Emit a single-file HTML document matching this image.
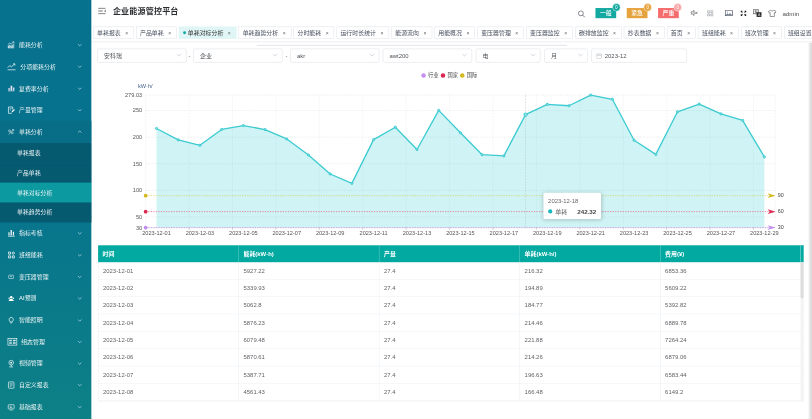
<!DOCTYPE html><html lang="zh"><head><meta charset="utf-8"><title>企业能源管控平台</title><style>
*{box-sizing:border-box;margin:0;padding:0}
html,body{width:812px;height:419px;overflow:hidden;background:#fff}
body{font-family:"Liberation Sans","Noto Sans CJK SC",sans-serif;color:#606266}
#app{position:absolute;left:0;top:0;width:1920px;height:991px;transform:scale(0.422917);transform-origin:0 0;overflow:hidden;background:#fff;filter:contrast(1)}
.abs{position:absolute}
#side{position:absolute;left:0;top:0;width:216px;height:991px;background:linear-gradient(180deg,#06728e 0%,#06728e 38%,#0d8086 100%)}
.mi{position:absolute;left:0;width:216px;height:51.3px;color:#fff;font-weight:350;font-size:14px;line-height:51px}
.mi .tx{position:absolute;left:45px;top:0;white-space:nowrap}
.mi svg.ic{position:absolute;left:17px;top:16px;width:19px;height:19px;overflow:visible}
.mi .ar{position:absolute;left:183px;top:20px;width:11px;height:11px}
.sub{position:absolute;left:0;width:216px;height:47.3px;color:#fff;font-weight:350;font-size:14px;line-height:47px;background:#065a70}
.sub .tx{position:absolute;left:40px;top:0;white-space:nowrap}
.sub.on{background:#0d99a0}
#title{position:absolute;left:267px;top:12px;font-size:19px;letter-spacing:0.4px;font-weight:bold;color:#2a2c30;line-height:28px;white-space:nowrap}
.tab{position:absolute;top:63px;height:29px;border:1px solid #d8dce5;background:#fff;color:#495060;font-size:14px;line-height:27px;white-space:nowrap;padding-left:8.5px}
.tab.on{background:#e0f5f5;border-color:#e0f5f5;color:#333}
.tab .x{position:absolute;right:12.5px;top:0.5px;font-size:12px;color:#666}
.tab .dot{display:inline-block;width:7px;height:7px;border-radius:50%;background:#13a8a8;margin-right:4.5px;position:relative;top:-1px}
#tabline{position:absolute;left:216px;top:-10px;width:1720px;height:108.5px;border-bottom:1px solid #e2e5eb;box-shadow:0 1px 3px 0 rgba(0,0,0,.10),0 0 3px 0 rgba(0,0,0,.03)}
.btn{position:absolute;top:18.5px;width:49px;height:24px;color:#fff;font-size:14px;font-weight:500;line-height:25px;text-align:center}
.bdg{position:absolute;top:8.2px;width:19px;height:19px;border-radius:50%;border:1.5px solid #fff;color:#fff;font-size:11px;line-height:16px;text-align:center}
.sel{position:absolute;top:115px;height:33px;border:1px solid #d3d6dd;border-radius:4px;background:#fff;font-size:14px;line-height:31px;color:#505358;padding-left:15px;white-space:nowrap}
.sel svg{position:absolute;right:10px;top:8.5px;width:13px;height:10px}
.dash{position:absolute;top:115px;font-size:14px;line-height:33px;color:#606266}
</style></head><body><div id="app"><div id="side">
<div class="mi" style="top:81.0px;"><svg class="ic" viewBox="0 0 19 19"><path d="M1.500 17V12L6 9L9.500 11L16.500 6V17z" fill="#fff" fill-opacity="0.850"/><path d="M4.800 17v-7 M8.200 17v-8 M11.600 17v-8 M14.800 17v-11" stroke="#07748f" stroke-width="0.900"/><path d="M1.500 8.500L6 5L9.500 7L15 2.500 M12.500 2h3.500v3.500" stroke="#fff" stroke-width="1.400" fill="none"/></svg><span class="tx">能耗分析</span><svg class="ar" viewBox="0 0 11 11"><path d="M1.5 3.5 L5.5 7.5 L9.5 3.5" fill="none" stroke="#bfe3e9" stroke-width="1.6"/></svg></div>
<div class="mi" style="top:132.3px;"><svg class="ic" viewBox="0 0 19 19"><path d="M1 17h19" stroke="#fff" stroke-width="1.6"/><path d="M1 12 L6 7 L10 10 L18 3 M14 3h4v4" stroke="#fff" stroke-width="1.7" fill="none"/></svg><span class="tx" style="left:48px">分项能耗分析</span><svg class="ar" viewBox="0 0 11 11"><path d="M1.5 3.5 L5.5 7.5 L9.5 3.5" fill="none" stroke="#bfe3e9" stroke-width="1.6"/></svg></div>
<div class="mi" style="top:183.6px;"><svg class="ic" viewBox="0 0 19 19"><path d="M2 16h15v-1.5H2z M3 14V8h3v6z M8 14V3h4v11z M14 14V7h3v7z" fill="#e8e4f4"/></svg><span class="tx">复费率分析</span><svg class="ar" viewBox="0 0 11 11"><path d="M1.5 3.5 L5.5 7.5 L9.5 3.5" fill="none" stroke="#bfe3e9" stroke-width="1.6"/></svg></div>
<div class="mi" style="top:234.9px;"><svg class="ic" viewBox="0 0 19 19"><path d="M3 2h10v6 M3 2v15h8" stroke="#fff" stroke-width="1.6" fill="none"/><path d="M6 6h5 M6 9h3" stroke="#fff" stroke-width="1.3"/><path d="M10 15l1-3 5-5 2 2-5 5z" fill="#fff"/></svg><span class="tx">产量管理</span><svg class="ar" viewBox="0 0 11 11"><path d="M1.5 3.5 L5.5 7.5 L9.5 3.5" fill="none" stroke="#bfe3e9" stroke-width="1.6"/></svg></div>
<div class="mi" style="top:286.2px;background:#086d86;"><svg class="ic" viewBox="0 0 19 19"><g transform="translate(2.500 3.500)" stroke="#e8f4f7" stroke-width="1.400" fill="none"><circle cx="3" cy="4" r="2.300"/><circle cx="9.500" cy="8.500" r="2.300"/><path d="M1 12.500C4 11 5 8 6.500 6S10 1.500 12.500 1"/><path d="M9 1h4v3.500"/></g></svg><span class="tx">单耗分析</span><svg class="ar" viewBox="0 0 11 11"><path d="M1.5 7.5 L5.5 3.5 L9.5 7.5" fill="none" stroke="#bfe3e9" stroke-width="1.6"/></svg></div>
<div class="sub" style="top:337.5px"><span class="tx">单耗报表</span></div>
<div class="sub" style="top:384.7px"><span class="tx">产品单耗</span></div>
<div class="sub on" style="top:431.9px"><span class="tx">单耗对标分析</span></div>
<div class="sub" style="top:479.1px"><span class="tx">单耗趋势分析</span></div>
<div class="mi" style="top:526.2px;"><svg class="ic" viewBox="0 0 19 19"><path d="M2 17h16v-1.5H2z M3 14V7h2.5v7z M8 14V2h3v12z M13.5 14V6H16v8z" fill="#fff"/></svg><span class="tx">指标考核</span><svg class="ar" viewBox="0 0 11 11"><path d="M1.5 3.5 L5.5 7.5 L9.5 3.5" fill="none" stroke="#bfe3e9" stroke-width="1.6"/></svg></div>
<div class="mi" style="top:577.5px;"><svg class="ic" viewBox="0 0 19 19"><path d="M3 2h5v5H3z M3 11h5v5H3z M12 11h5v5h-5z" stroke="#fff" stroke-width="1.7" fill="none"/><circle cx="14.5" cy="4.5" r="2.6" stroke="#fff" stroke-width="1.7" fill="none"/></svg><span class="tx">班组能耗</span><svg class="ar" viewBox="0 0 11 11"><path d="M1.5 3.5 L5.5 7.5 L9.5 3.5" fill="none" stroke="#bfe3e9" stroke-width="1.6"/></svg></div>
<div class="mi" style="top:628.8px;"><svg class="ic" viewBox="0 0 19 19"><rect x="3.500" y="5.500" width="11.500" height="8" rx="1.200" stroke="#dbeef2" stroke-width="1.400" fill="none"/><path d="M7 8.500h4.500v1.600H7z" fill="#dbeef2"/></svg><span class="tx">变压器管理</span><svg class="ar" viewBox="0 0 11 11"><path d="M1.5 3.5 L5.5 7.5 L9.5 3.5" fill="none" stroke="#bfe3e9" stroke-width="1.6"/></svg></div>
<div class="mi" style="top:680.2px;"><svg class="ic" viewBox="0 0 19 19"><circle cx="9.500" cy="7" r="3" fill="#fff"/><path d="M3.500 15.500c0-3.500 3-4.500 6-4.500s6 1 6 4.500z" fill="#fff"/><circle cx="4.500" cy="9" r="1.700" fill="#fff"/><circle cx="14.500" cy="9" r="1.700" fill="#fff"/></svg><span class="tx">AI预测</span><svg class="ar" viewBox="0 0 11 11"><path d="M1.5 3.5 L5.5 7.5 L9.5 3.5" fill="none" stroke="#bfe3e9" stroke-width="1.6"/></svg></div>
<div class="mi" style="top:731.5px;"><svg class="ic" viewBox="0 0 19 19"><path d="M9.500 2.500a5 5 0 0 0-3 9v2h6v-2a5 5 0 0 0-3-9z" stroke="#fff" stroke-width="1.6" fill="none"/><path d="M7.500 15.500h4" stroke="#fff" stroke-width="1.5"/></svg><span class="tx">智能照明</span><svg class="ar" viewBox="0 0 11 11"><path d="M1.5 3.5 L5.5 7.5 L9.5 3.5" fill="none" stroke="#bfe3e9" stroke-width="1.6"/></svg></div>
<div class="mi" style="top:782.8px;"><svg class="ic" viewBox="0 0 19 19"><g transform="translate(1 -0.500)"><rect x="0.800" y="1.500" width="21" height="16" stroke="#fff" stroke-width="1.500" fill="none"/><path d="M4 5h6v3.500H4z M12.500 5h6.500v3.500h-6.500z M4 11h6v3.500H4z M12.500 11h6.500v3.500h-6.500z" fill="#cfe8ec"/></g></svg><span class="tx" style="left:50px">组态管理</span><svg class="ar" viewBox="0 0 11 11"><path d="M1.5 3.5 L5.5 7.5 L9.5 3.5" fill="none" stroke="#bfe3e9" stroke-width="1.6"/></svg></div>
<div class="mi" style="top:834.1px;"><svg class="ic" viewBox="0 0 19 19"><circle cx="9.500" cy="7.500" r="5.500" stroke="#fff" stroke-width="1.500" fill="none"/><circle cx="9.500" cy="7.500" r="2.200" fill="#fff"/><path d="M5 17.500h9 M9.500 13v4" stroke="#fff" stroke-width="1.600"/></svg><span class="tx">视频管理</span><svg class="ar" viewBox="0 0 11 11"><path d="M1.5 3.5 L5.5 7.5 L9.5 3.5" fill="none" stroke="#bfe3e9" stroke-width="1.6"/></svg></div>
<div class="mi" style="top:885.4px;"><svg class="ic" viewBox="0 0 19 19"><rect x="3" y="2" width="13" height="15" rx="1.500" stroke="#fff" stroke-width="1.500" fill="none"/><path d="M6 6.500h7 M6 9.500h7 M6 12.500h4" stroke="#fff" stroke-width="1.300"/></svg><span class="tx">自定义报表</span><svg class="ar" viewBox="0 0 11 11"><path d="M1.5 3.5 L5.5 7.5 L9.5 3.5" fill="none" stroke="#bfe3e9" stroke-width="1.6"/></svg></div>
<div class="mi" style="top:936.7px;"><svg class="ic" viewBox="0 0 19 19"><rect x="2.500" y="4" width="14" height="10" rx="1.500" stroke="#fff" stroke-width="1.500" fill="none"/><path d="M6 16.500h7 M6 8h4 M6 10.500h6" stroke="#fff" stroke-width="1.300"/></svg><span class="tx">基础报表</span><svg class="ar" viewBox="0 0 11 11"><path d="M1.5 3.5 L5.5 7.5 L9.5 3.5" fill="none" stroke="#bfe3e9" stroke-width="1.6"/></svg></div>
</div>
<svg class="abs" style="left:232px;top:18px;width:18px;height:16px" viewBox="0 0 18 16"><path d="M0 1.500h18 M0 8h11 M0 14.500h18" stroke="#333" stroke-width="1.600"/><path d="M18 5v6l-3.500-3z" fill="#333"/></svg>
<div id="title">企业能源管控平台</div>
<svg class="abs" style="left:1366px;top:24px;width:18px;height:18px" viewBox="0 0 18 18"><circle cx="7.500" cy="7.500" r="5.800" stroke="#5a5e66" stroke-width="1.700" fill="none"/><path d="M11.800 11.800L16.800 16.800" stroke="#5a5e66" stroke-width="1.900"/></svg>
<div class="btn" style="left:1408px;background:#12a9a1">一般</div>
<div class="bdg" style="left:1448px;background:#12a9a1">0</div>
<div class="btn" style="left:1482px;background:#e6a23c">紧急</div>
<div class="bdg" style="left:1522px;background:#e6a23c">0</div>
<div class="btn" style="left:1556px;background:#f56c6c">严重</div>
<div class="bdg" style="left:1593px;background:#f9a3a3">0</div>
<svg class="abs" style="left:1633px;top:23px;width:18px;height:15px" viewBox="0 0 18 15"><path d="M1 5h3l4-3.500v12L4 10H1z" stroke="#505050" stroke-width="1.600" fill="none"/><path d="M11 5l5 5 M16 5l-5 5" stroke="#505050" stroke-width="1.600"/></svg>
<svg class="abs" style="left:1672px;top:24px;width:15px;height:15px" viewBox="0 0 15 15"><path d="M1 1h5v5H1z M9 1h5v5H9z M1 9h5v5H1z M9 9h5v5H9z" stroke="#9a9ea6" stroke-width="1.600" fill="none" stroke-linejoin="round"/></svg>
<svg class="abs" style="left:1714px;top:24px;width:19px;height:14px" viewBox="0 0 19 14"><rect x="0.800" y="0.800" width="17.400" height="12.400" stroke="#394050" stroke-width="1.600" fill="none"/><path d="M2 11.500l4-4 3 3 3-4 5 5z" fill="#7a8496"/><circle cx="6" cy="4.500" r="1.300" fill="#7a8496"/></svg>
<svg class="abs" style="left:1751px;top:25px;width:14px;height:13px" viewBox="0 0 14 13"><path d="M0 0h5L3.500 1.500 5.500 3.500 3.500 5.500 1.500 3.500 0 5z M14 0v5l-1.500-1.500-2 2-2-2 2-2L9 0z M0 13V8l1.500 1.500 2-2 2 2-2 2L5 13z M14 13H9l1.500-1.500-2-2 2-2 2 2L14 8z" fill="#222"/></svg>
<svg class="abs" style="left:1781px;top:22px;width:20px;height:18px" viewBox="0 0 20 18"><rect x="0.700" y="0.700" width="11" height="10" stroke="#222" stroke-width="1.400" fill="#fff"/><path d="M3 4h6.500 M6.200 2.500v5 M4 7.500h4.500" stroke="#222" stroke-width="1.100"/><rect x="8" y="7" width="12" height="11" fill="#222"/><path d="M11.500 16l2.500-6.500 2.500 6.500 M12.500 14h3" stroke="#fff" stroke-width="1.200" fill="none"/></svg>
<svg class="abs" style="left:1816px;top:23px;width:20px;height:17px" viewBox="0 0 20 17"><path d="M6.500 1 L1 4 L3 8 L5 7 V16 H15 V7 L17 8 L19 4 L13.500 1 C12.500 3.500 7.500 3.500 6.500 1z" stroke="#444" stroke-width="1.300" fill="none" stroke-linejoin="round"/></svg>
<div class="abs" style="left:1850px;top:22px;font-size:14.600px;line-height:20px;color:#505050">admin</div>
<div class="tab" style="left:220.0px;width:96.6px">单耗报表<span class="x">×</span></div>
<div class="tab" style="left:321.6px;width:96.6px">产品单耗<span class="x">×</span></div>
<div class="tab on" style="left:423.2px;width:136.1px"><span class="dot"></span>单耗对标分析<span class="x">×</span></div>
<div class="tab" style="left:564.3px;width:124.6px">单耗趋势分析<span class="x">×</span></div>
<div class="tab" style="left:693.9px;width:96.6px">分时能耗<span class="x">×</span></div>
<div class="tab" style="left:795.5px;width:124.6px">运行时长统计<span class="x">×</span></div>
<div class="tab" style="left:925.1px;width:96.6px">能源流向<span class="x">×</span></div>
<div class="tab" style="left:1026.7px;width:96.6px">用能概况<span class="x">×</span></div>
<div class="tab" style="left:1128.3px;width:110.6px">变压器管理<span class="x">×</span></div>
<div class="tab" style="left:1243.9px;width:110.6px">变压器监控<span class="x">×</span></div>
<div class="tab" style="left:1359.5px;width:110.6px">碳排放监控<span class="x">×</span></div>
<div class="tab" style="left:1475.1px;width:96.6px">抄表数据<span class="x">×</span></div>
<div class="tab" style="left:1576.7px;width:68.6px">首页<span class="x">×</span></div>
<div class="tab" style="left:1650.3px;width:96.6px">班组能耗<span class="x">×</span></div>
<div class="tab" style="left:1751.9px;width:96.6px">班次管理<span class="x">×</span></div>
<div class="tab" style="left:1853.5px;width:96.6px">班组设置<span class="x">×</span></div>
<div id="tabline"></div>
<div class="abs" style="left:607px;top:105.500px;width:734px;height:3.500px;background:#e9eaee;border-radius:2px"></div>
<div class="abs" style="left:1911.500px;top:101px;width:9px;height:890px;background:linear-gradient(90deg,#efefef,#d4d4d4)"></div>
<div class="sel" style="left:230px;width:211px">安科瑞<svg viewBox="0 0 13 10"><path d="M1.500 2.500L6.500 7.500L11.500 2.500" stroke="#b4b8bf" stroke-width="1.300" fill="none"/></svg></div>
<div class="sel" style="left:457px;width:211px">企业<svg viewBox="0 0 13 10"><path d="M1.500 2.500L6.500 7.500L11.500 2.500" stroke="#b4b8bf" stroke-width="1.300" fill="none"/></svg></div>
<div class="sel" style="left:686px;width:211px">akr<svg viewBox="0 0 13 10"><path d="M1.500 2.500L6.500 7.500L11.500 2.500" stroke="#b4b8bf" stroke-width="1.300" fill="none"/></svg></div>
<div class="sel" style="left:905px;width:211px">awt200<svg viewBox="0 0 13 10"><path d="M1.500 2.500L6.500 7.500L11.500 2.500" stroke="#b4b8bf" stroke-width="1.300" fill="none"/></svg></div>
<div class="sel" style="left:1125px;width:153px">电<svg viewBox="0 0 13 10"><path d="M1.500 2.500L6.500 7.500L11.500 2.500" stroke="#b4b8bf" stroke-width="1.300" fill="none"/></svg></div>
<div class="sel" style="left:1287px;width:103px">月<svg viewBox="0 0 13 10"><path d="M1.500 2.500L6.500 7.500L11.500 2.500" stroke="#b4b8bf" stroke-width="1.300" fill="none"/></svg></div>
<div class="dash" style="left:446px">-</div><div class="dash" style="left:675px">-</div>
<div class="sel" style="left:1398px;width:226px;padding-left:31px">2023-12<svg style="left:11px;top:9.500px;right:auto;width:13px;height:13px" viewBox="0 0 13 13"><rect x="0.700" y="1.700" width="11.600" height="10.600" rx="1" stroke="#b4b8bf" stroke-width="1.200" fill="none"/><path d="M0.700 5h11.600 M4 0.500v2.500 M9 0.500v2.500" stroke="#b4b8bf" stroke-width="1.200"/></svg></div>
<svg class="abs" style="left:0;top:0" width="1920" height="600" viewBox="0 0 1920 600" font-family="'Liberation Sans','Noto Sans CJK SC',sans-serif"><path d="M344.4 224.9H1833.0" stroke="#dcdcdc" stroke-width="1" stroke-dasharray="4 3"/><path d="M344.4 261.4H1833.0" stroke="#dcdcdc" stroke-width="1" stroke-dasharray="4 3"/><path d="M344.4 324.3H1833.0" stroke="#dcdcdc" stroke-width="1" stroke-dasharray="4 3"/><path d="M344.4 387.2H1833.0" stroke="#dcdcdc" stroke-width="1" stroke-dasharray="4 3"/><path d="M344.4 450.1H1833.0" stroke="#dcdcdc" stroke-width="1" stroke-dasharray="4 3"/><path d="M344.4 513.0H1833.0" stroke="#dcdcdc" stroke-width="1" stroke-dasharray="4 3"/><path d="M344.4 225.3V538.2" stroke="#e4e4e4" stroke-width="1" stroke-dasharray="4 3"/><path d="M447.1 225.3V538.2" stroke="#e4e4e4" stroke-width="1" stroke-dasharray="4 3"/><path d="M549.7 225.3V538.2" stroke="#e4e4e4" stroke-width="1" stroke-dasharray="4 3"/><path d="M652.4 225.3V538.2" stroke="#e4e4e4" stroke-width="1" stroke-dasharray="4 3"/><path d="M755.0 225.3V538.2" stroke="#e4e4e4" stroke-width="1" stroke-dasharray="4 3"/><path d="M857.7 225.3V538.2" stroke="#e4e4e4" stroke-width="1" stroke-dasharray="4 3"/><path d="M960.4 225.3V538.2" stroke="#e4e4e4" stroke-width="1" stroke-dasharray="4 3"/><path d="M1063.0 225.3V538.2" stroke="#e4e4e4" stroke-width="1" stroke-dasharray="4 3"/><path d="M1165.7 225.3V538.2" stroke="#e4e4e4" stroke-width="1" stroke-dasharray="4 3"/><path d="M1268.3 225.3V538.2" stroke="#e4e4e4" stroke-width="1" stroke-dasharray="4 3"/><path d="M1371.0 225.3V538.2" stroke="#e4e4e4" stroke-width="1" stroke-dasharray="4 3"/><path d="M1473.7 225.3V538.2" stroke="#e4e4e4" stroke-width="1" stroke-dasharray="4 3"/><path d="M1576.3 225.3V538.2" stroke="#e4e4e4" stroke-width="1" stroke-dasharray="4 3"/><path d="M1679.0 225.3V538.2" stroke="#e4e4e4" stroke-width="1" stroke-dasharray="4 3"/><path d="M1781.7 225.3V538.2" stroke="#e4e4e4" stroke-width="1" stroke-dasharray="4 3"/><path d="M1833.0 225.3V538.2" stroke="#e4e4e4" stroke-width="1" stroke-dasharray="4 3"/><path d="M370.1 538.2 L370.1 303.8 L421.4 330.7 L472.7 343.5 L524.1 306.1 L575.4 296.8 L626.7 306.4 L678.0 328.6 L729.4 366.5 L780.7 411.4 L832.0 433.6 L883.4 330.1 L934.7 300.8 L986.0 353.5 L1037.4 261.0 L1088.7 314.0 L1140.0 365.8 L1191.4 368.6 L1242.7 271.1 L1294.0 246.8 L1345.3 250.0 L1396.7 224.9 L1448.0 234.8 L1499.3 331.5 L1550.7 365.1 L1602.0 264.3 L1653.3 246.2 L1704.7 269.3 L1756.0 284.7 L1807.3 371.0 L1807.3 538.2 Z" fill="rgb(54,207,212)" fill-opacity="0.235"/><path d="M344.4 538.2H1833.0" stroke="#c8c8d0" stroke-width="1"/><path d="M344.4 538.2v5" stroke="#8a8c94" stroke-width="1"/><path d="M447.1 538.2v5" stroke="#8a8c94" stroke-width="1"/><path d="M549.7 538.2v5" stroke="#8a8c94" stroke-width="1"/><path d="M652.4 538.2v5" stroke="#8a8c94" stroke-width="1"/><path d="M755.0 538.2v5" stroke="#8a8c94" stroke-width="1"/><path d="M857.7 538.2v5" stroke="#8a8c94" stroke-width="1"/><path d="M960.4 538.2v5" stroke="#8a8c94" stroke-width="1"/><path d="M1063.0 538.2v5" stroke="#8a8c94" stroke-width="1"/><path d="M1165.7 538.2v5" stroke="#8a8c94" stroke-width="1"/><path d="M1268.3 538.2v5" stroke="#8a8c94" stroke-width="1"/><path d="M1371.0 538.2v5" stroke="#8a8c94" stroke-width="1"/><path d="M1473.7 538.2v5" stroke="#8a8c94" stroke-width="1"/><path d="M1576.3 538.2v5" stroke="#8a8c94" stroke-width="1"/><path d="M1679.0 538.2v5" stroke="#8a8c94" stroke-width="1"/><path d="M1781.7 538.2v5" stroke="#8a8c94" stroke-width="1"/><path d="M1242.7 225.3V538.2" stroke="#b4bbc0" stroke-width="1.100" stroke-dasharray="4 3"/><path d="M344.4 462.7H1820.0" stroke="#d8c032" stroke-width="1.800" stroke-dasharray="3 3" opacity="0.75"/><path d="M344.4 500.4H1820.0" stroke="#e0406a" stroke-width="1.800" stroke-dasharray="3 3" opacity="0.80"/><path d="M344.4 538.2H1820.0" stroke="#c08cf0" stroke-width="1.800" stroke-dasharray="3 3" opacity="0.90"/><circle cx="344.4" cy="462.7" r="4.500" fill="#d4b820"/><path d="M1834.0 462.7 l-19 -5.500 l5 5.500 l-5 5.500z" fill="#d4b820"/><text x="1839.0" y="466.2" font-size="12.600" fill="#444">90</text><circle cx="344.4" cy="500.4" r="4.500" fill="#dc2850"/><path d="M1834.0 500.4 l-19 -5.500 l5 5.500 l-5 5.500z" fill="#dc2850"/><text x="1839.0" y="503.9" font-size="12.600" fill="#444">60</text><circle cx="344.4" cy="538.2" r="4.500" fill="#c08cf0"/><path d="M1834.0 538.2 l-19 -5.500 l5 5.500 l-5 5.500z" fill="#c08cf0"/><text x="1839.0" y="541.7" font-size="12.600" fill="#444">30</text><path d="M370.1 303.8 L421.4 330.7 L472.7 343.5 L524.1 306.1 L575.4 296.8 L626.7 306.4 L678.0 328.6 L729.4 366.5 L780.7 411.4 L832.0 433.6 L883.4 330.1 L934.7 300.8 L986.0 353.5 L1037.4 261.0 L1088.7 314.0 L1140.0 365.8 L1191.4 368.6 L1242.7 271.1 L1294.0 246.8 L1345.3 250.0 L1396.7 224.9 L1448.0 234.8 L1499.3 331.5 L1550.7 365.1 L1602.0 264.3 L1653.3 246.2 L1704.7 269.3 L1756.0 284.7 L1807.3 371.0" fill="none" stroke="#3ccbd0" stroke-width="3.100" stroke-linejoin="round"/><circle cx="370.1" cy="303.8" r="2.6" fill="#8fe0e3" stroke="#3ccbd0" stroke-width="2.300"/><circle cx="421.4" cy="330.7" r="2.6" fill="#8fe0e3" stroke="#3ccbd0" stroke-width="2.300"/><circle cx="472.7" cy="343.5" r="2.6" fill="#8fe0e3" stroke="#3ccbd0" stroke-width="2.300"/><circle cx="524.1" cy="306.1" r="2.6" fill="#8fe0e3" stroke="#3ccbd0" stroke-width="2.300"/><circle cx="575.4" cy="296.8" r="2.6" fill="#8fe0e3" stroke="#3ccbd0" stroke-width="2.300"/><circle cx="626.7" cy="306.4" r="2.6" fill="#8fe0e3" stroke="#3ccbd0" stroke-width="2.300"/><circle cx="678.0" cy="328.6" r="2.6" fill="#8fe0e3" stroke="#3ccbd0" stroke-width="2.300"/><circle cx="729.4" cy="366.5" r="2.6" fill="#8fe0e3" stroke="#3ccbd0" stroke-width="2.300"/><circle cx="780.7" cy="411.4" r="2.6" fill="#8fe0e3" stroke="#3ccbd0" stroke-width="2.300"/><circle cx="832.0" cy="433.6" r="2.6" fill="#8fe0e3" stroke="#3ccbd0" stroke-width="2.300"/><circle cx="883.4" cy="330.1" r="2.6" fill="#8fe0e3" stroke="#3ccbd0" stroke-width="2.300"/><circle cx="934.7" cy="300.8" r="2.6" fill="#8fe0e3" stroke="#3ccbd0" stroke-width="2.300"/><circle cx="986.0" cy="353.5" r="2.6" fill="#8fe0e3" stroke="#3ccbd0" stroke-width="2.300"/><circle cx="1037.4" cy="261.0" r="2.6" fill="#8fe0e3" stroke="#3ccbd0" stroke-width="2.300"/><circle cx="1088.7" cy="314.0" r="2.6" fill="#8fe0e3" stroke="#3ccbd0" stroke-width="2.300"/><circle cx="1140.0" cy="365.8" r="2.6" fill="#8fe0e3" stroke="#3ccbd0" stroke-width="2.300"/><circle cx="1191.4" cy="368.6" r="2.6" fill="#8fe0e3" stroke="#3ccbd0" stroke-width="2.300"/><circle cx="1242.7" cy="271.1" r="4.0" fill="#8fe0e3" stroke="#3ccbd0" stroke-width="2.300"/><circle cx="1294.0" cy="246.8" r="2.6" fill="#8fe0e3" stroke="#3ccbd0" stroke-width="2.300"/><circle cx="1345.3" cy="250.0" r="2.6" fill="#8fe0e3" stroke="#3ccbd0" stroke-width="2.300"/><circle cx="1396.7" cy="224.9" r="2.6" fill="#8fe0e3" stroke="#3ccbd0" stroke-width="2.300"/><circle cx="1448.0" cy="234.8" r="2.6" fill="#8fe0e3" stroke="#3ccbd0" stroke-width="2.300"/><circle cx="1499.3" cy="331.5" r="2.6" fill="#8fe0e3" stroke="#3ccbd0" stroke-width="2.300"/><circle cx="1550.7" cy="365.1" r="2.6" fill="#8fe0e3" stroke="#3ccbd0" stroke-width="2.300"/><circle cx="1602.0" cy="264.3" r="2.6" fill="#8fe0e3" stroke="#3ccbd0" stroke-width="2.300"/><circle cx="1653.3" cy="246.2" r="2.6" fill="#8fe0e3" stroke="#3ccbd0" stroke-width="2.300"/><circle cx="1704.7" cy="269.3" r="2.6" fill="#8fe0e3" stroke="#3ccbd0" stroke-width="2.300"/><circle cx="1756.0" cy="284.7" r="2.6" fill="#8fe0e3" stroke="#3ccbd0" stroke-width="2.300"/><circle cx="1807.3" cy="371.0" r="2.6" fill="#8fe0e3" stroke="#3ccbd0" stroke-width="2.300"/><text x="336.2" y="229.4" font-size="13.300" fill="#555" text-anchor="end">279.03</text><text x="336.2" y="265.9" font-size="13.300" fill="#555" text-anchor="end">250</text><text x="336.2" y="328.8" font-size="13.300" fill="#555" text-anchor="end">200</text><text x="336.2" y="391.7" font-size="13.300" fill="#555" text-anchor="end">150</text><text x="336.2" y="454.6" font-size="13.300" fill="#555" text-anchor="end">100</text><text x="336.2" y="517.5" font-size="13.300" fill="#555" text-anchor="end">50</text><text x="336.2" y="542.7" font-size="13.300" fill="#555" text-anchor="end">30</text><text x="326.3" y="207.4" font-size="13.300" fill="#44618a">kW·h/</text><text x="370.1" y="555.9" font-size="13.200" fill="#555" text-anchor="middle">2023-12-01</text><text x="472.7" y="555.9" font-size="13.200" fill="#555" text-anchor="middle">2023-12-03</text><text x="575.4" y="555.9" font-size="13.200" fill="#555" text-anchor="middle">2023-12-05</text><text x="678.0" y="555.9" font-size="13.200" fill="#555" text-anchor="middle">2023-12-07</text><text x="780.7" y="555.9" font-size="13.200" fill="#555" text-anchor="middle">2023-12-09</text><text x="883.4" y="555.9" font-size="13.200" fill="#555" text-anchor="middle">2023-12-11</text><text x="986.0" y="555.9" font-size="13.200" fill="#555" text-anchor="middle">2023-12-13</text><text x="1088.7" y="555.9" font-size="13.200" fill="#555" text-anchor="middle">2023-12-15</text><text x="1191.4" y="555.9" font-size="13.200" fill="#555" text-anchor="middle">2023-12-17</text><text x="1294.0" y="555.9" font-size="13.200" fill="#555" text-anchor="middle">2023-12-19</text><text x="1396.7" y="555.9" font-size="13.200" fill="#555" text-anchor="middle">2023-12-21</text><text x="1499.3" y="555.9" font-size="13.200" fill="#555" text-anchor="middle">2023-12-23</text><text x="1602.0" y="555.9" font-size="13.200" fill="#555" text-anchor="middle">2023-12-25</text><text x="1704.7" y="555.9" font-size="13.200" fill="#555" text-anchor="middle">2023-12-27</text><text x="1807.3" y="555.9" font-size="13.200" fill="#555" text-anchor="middle">2023-12-29</text><circle cx="1001.6" cy="178.500" r="5.400" fill="#c490f2"/><text x="1012.1" y="183" font-size="12.500" fill="#444">行业</text><circle cx="1047.5" cy="178.500" r="5.400" fill="#dc2850"/><text x="1058.0" y="183" font-size="12.500" fill="#444">国家</text><circle cx="1093.0" cy="178.500" r="5.400" fill="#d4b820"/><text x="1103.5" y="183" font-size="12.500" fill="#444">国际</text></svg>
<div class="abs" style="left:1285px;top:456px;width:136px;height:62px;background:#fff;border-radius:4px;box-shadow:1px 2px 10px rgba(0,0,0,0.200);font-size:14px;color:#666"><div class="abs" style="left:11px;top:9px;line-height:20px;white-space:nowrap">2023-12-18</div><div class="abs" style="left:11px;top:39px;width:10px;height:10px;border-radius:50%;background:#19b8bd"></div><div class="abs" style="left:28px;top:34px;line-height:20px;white-space:nowrap">单耗</div><div class="abs" style="right:11px;top:34px;line-height:20px;font-weight:bold;font-size:14.800px;color:#464646;white-space:nowrap">242.32</div></div>
<div class="abs" style="left:231.5px;top:579.8px;width:1668.0px;height:369.0px;border:1px solid #e6ebf0;border-top:none;background:#fff">
<div class="abs" style="left:-1px;top:0;width:1668.0px;height:40px;background:#01a9a1"></div>
<div class="abs" style="left:-1.0px;top:0;height:40px;line-height:43px;font-size:14px;font-weight:bold;color:#fff;white-space:nowrap;padding-left:11px;">时间</div>
<div class="abs" style="left:331.3px;top:0;height:40px;line-height:43px;font-size:14px;font-weight:bold;color:#fff;white-space:nowrap;padding-left:11px;border-left:1px solid #7fd4d0;">能耗(kW·h)</div>
<div class="abs" style="left:663.6px;top:0;height:40px;line-height:43px;font-size:14px;font-weight:bold;color:#fff;white-space:nowrap;padding-left:11px;border-left:1px solid #7fd4d0;">产量</div>
<div class="abs" style="left:995.9px;top:0;height:40px;line-height:43px;font-size:14px;font-weight:bold;color:#fff;white-space:nowrap;padding-left:11px;border-left:1px solid #7fd4d0;">单耗(kW·h/)</div>
<div class="abs" style="left:1328.2px;top:0;height:40px;line-height:43px;font-size:14px;font-weight:bold;color:#fff;white-space:nowrap;padding-left:11px;border-left:1px solid #7fd4d0;">费用(¥)</div>
<div class="abs" style="left:0;top:40px;width:100%;height:41px;border-bottom:1px solid #e6ebf0"></div>
<div class="abs" style="left:0.0px;top:40px;height:40px;line-height:40px;font-size:14px;color:#606266;white-space:nowrap;padding-left:11px">2023-12-01</div>
<div class="abs" style="left:332.3px;top:40px;height:40px;line-height:40px;font-size:14px;color:#606266;white-space:nowrap;padding-left:11px">5927.22</div>
<div class="abs" style="left:664.6px;top:40px;height:40px;line-height:40px;font-size:14px;color:#606266;white-space:nowrap;padding-left:11px">27.4</div>
<div class="abs" style="left:996.9px;top:40px;height:40px;line-height:40px;font-size:14px;color:#606266;white-space:nowrap;padding-left:11px">216.32</div>
<div class="abs" style="left:1329.2px;top:40px;height:40px;line-height:40px;font-size:14px;color:#606266;white-space:nowrap;padding-left:11px">6853.36</div>
<div class="abs" style="left:0;top:81px;width:100%;height:41px;border-bottom:1px solid #e6ebf0"></div>
<div class="abs" style="left:0.0px;top:81px;height:40px;line-height:40px;font-size:14px;color:#606266;white-space:nowrap;padding-left:11px">2023-12-02</div>
<div class="abs" style="left:332.3px;top:81px;height:40px;line-height:40px;font-size:14px;color:#606266;white-space:nowrap;padding-left:11px">5339.93</div>
<div class="abs" style="left:664.6px;top:81px;height:40px;line-height:40px;font-size:14px;color:#606266;white-space:nowrap;padding-left:11px">27.4</div>
<div class="abs" style="left:996.9px;top:81px;height:40px;line-height:40px;font-size:14px;color:#606266;white-space:nowrap;padding-left:11px">194.89</div>
<div class="abs" style="left:1329.2px;top:81px;height:40px;line-height:40px;font-size:14px;color:#606266;white-space:nowrap;padding-left:11px">5609.22</div>
<div class="abs" style="left:0;top:122px;width:100%;height:41px;border-bottom:1px solid #e6ebf0"></div>
<div class="abs" style="left:0.0px;top:122px;height:40px;line-height:40px;font-size:14px;color:#606266;white-space:nowrap;padding-left:11px">2023-12-03</div>
<div class="abs" style="left:332.3px;top:122px;height:40px;line-height:40px;font-size:14px;color:#606266;white-space:nowrap;padding-left:11px">5062.8</div>
<div class="abs" style="left:664.6px;top:122px;height:40px;line-height:40px;font-size:14px;color:#606266;white-space:nowrap;padding-left:11px">27.4</div>
<div class="abs" style="left:996.9px;top:122px;height:40px;line-height:40px;font-size:14px;color:#606266;white-space:nowrap;padding-left:11px">184.77</div>
<div class="abs" style="left:1329.2px;top:122px;height:40px;line-height:40px;font-size:14px;color:#606266;white-space:nowrap;padding-left:11px">5392.82</div>
<div class="abs" style="left:0;top:163px;width:100%;height:41px;border-bottom:1px solid #e6ebf0"></div>
<div class="abs" style="left:0.0px;top:163px;height:40px;line-height:40px;font-size:14px;color:#606266;white-space:nowrap;padding-left:11px">2023-12-04</div>
<div class="abs" style="left:332.3px;top:163px;height:40px;line-height:40px;font-size:14px;color:#606266;white-space:nowrap;padding-left:11px">5876.23</div>
<div class="abs" style="left:664.6px;top:163px;height:40px;line-height:40px;font-size:14px;color:#606266;white-space:nowrap;padding-left:11px">27.4</div>
<div class="abs" style="left:996.9px;top:163px;height:40px;line-height:40px;font-size:14px;color:#606266;white-space:nowrap;padding-left:11px">214.46</div>
<div class="abs" style="left:1329.2px;top:163px;height:40px;line-height:40px;font-size:14px;color:#606266;white-space:nowrap;padding-left:11px">6889.78</div>
<div class="abs" style="left:0;top:204px;width:100%;height:41px;border-bottom:1px solid #e6ebf0"></div>
<div class="abs" style="left:0.0px;top:204px;height:40px;line-height:40px;font-size:14px;color:#606266;white-space:nowrap;padding-left:11px">2023-12-05</div>
<div class="abs" style="left:332.3px;top:204px;height:40px;line-height:40px;font-size:14px;color:#606266;white-space:nowrap;padding-left:11px">6079.48</div>
<div class="abs" style="left:664.6px;top:204px;height:40px;line-height:40px;font-size:14px;color:#606266;white-space:nowrap;padding-left:11px">27.4</div>
<div class="abs" style="left:996.9px;top:204px;height:40px;line-height:40px;font-size:14px;color:#606266;white-space:nowrap;padding-left:11px">221.88</div>
<div class="abs" style="left:1329.2px;top:204px;height:40px;line-height:40px;font-size:14px;color:#606266;white-space:nowrap;padding-left:11px">7264.24</div>
<div class="abs" style="left:0;top:245px;width:100%;height:41px;border-bottom:1px solid #e6ebf0"></div>
<div class="abs" style="left:0.0px;top:245px;height:40px;line-height:40px;font-size:14px;color:#606266;white-space:nowrap;padding-left:11px">2023-12-06</div>
<div class="abs" style="left:332.3px;top:245px;height:40px;line-height:40px;font-size:14px;color:#606266;white-space:nowrap;padding-left:11px">5870.61</div>
<div class="abs" style="left:664.6px;top:245px;height:40px;line-height:40px;font-size:14px;color:#606266;white-space:nowrap;padding-left:11px">27.4</div>
<div class="abs" style="left:996.9px;top:245px;height:40px;line-height:40px;font-size:14px;color:#606266;white-space:nowrap;padding-left:11px">214.26</div>
<div class="abs" style="left:1329.2px;top:245px;height:40px;line-height:40px;font-size:14px;color:#606266;white-space:nowrap;padding-left:11px">6879.06</div>
<div class="abs" style="left:0;top:286px;width:100%;height:41px;border-bottom:1px solid #e6ebf0"></div>
<div class="abs" style="left:0.0px;top:286px;height:40px;line-height:40px;font-size:14px;color:#606266;white-space:nowrap;padding-left:11px">2023-12-07</div>
<div class="abs" style="left:332.3px;top:286px;height:40px;line-height:40px;font-size:14px;color:#606266;white-space:nowrap;padding-left:11px">5387.71</div>
<div class="abs" style="left:664.6px;top:286px;height:40px;line-height:40px;font-size:14px;color:#606266;white-space:nowrap;padding-left:11px">27.4</div>
<div class="abs" style="left:996.9px;top:286px;height:40px;line-height:40px;font-size:14px;color:#606266;white-space:nowrap;padding-left:11px">196.63</div>
<div class="abs" style="left:1329.2px;top:286px;height:40px;line-height:40px;font-size:14px;color:#606266;white-space:nowrap;padding-left:11px">6583.44</div>
<div class="abs" style="left:0;top:327px;width:100%;height:41px;border-bottom:1px solid #e6ebf0"></div>
<div class="abs" style="left:0.0px;top:327px;height:40px;line-height:40px;font-size:14px;color:#606266;white-space:nowrap;padding-left:11px">2023-12-08</div>
<div class="abs" style="left:332.3px;top:327px;height:40px;line-height:40px;font-size:14px;color:#606266;white-space:nowrap;padding-left:11px">4561.43</div>
<div class="abs" style="left:664.6px;top:327px;height:40px;line-height:40px;font-size:14px;color:#606266;white-space:nowrap;padding-left:11px">27.4</div>
<div class="abs" style="left:996.9px;top:327px;height:40px;line-height:40px;font-size:14px;color:#606266;white-space:nowrap;padding-left:11px">166.48</div>
<div class="abs" style="left:1329.2px;top:327px;height:40px;line-height:40px;font-size:14px;color:#606266;white-space:nowrap;padding-left:11px">6149.2</div>
<div class="abs" style="left:331.3px;top:40px;width:1px;height:328px;background:#e6ebf0"></div>
<div class="abs" style="left:663.6px;top:40px;width:1px;height:328px;background:#e6ebf0"></div>
<div class="abs" style="left:995.9px;top:40px;width:1px;height:328px;background:#e6ebf0"></div>
<div class="abs" style="left:1328.2px;top:40px;width:1px;height:328px;background:#e6ebf0"></div>
<div class="abs" style="left:1660.0px;top:0;width:7px;height:368px;background:#f4f4f4"></div>
<div class="abs" style="left:1660.0px;top:0;width:7px;height:40px;background:#01a9a1;border-left:1px solid #7fd4d0"></div>
<div class="abs" style="left:1660.0px;top:40px;width:7px;height:85px;background:#dcdcdc;border-radius:3px"></div>
</div></div></body></html>
